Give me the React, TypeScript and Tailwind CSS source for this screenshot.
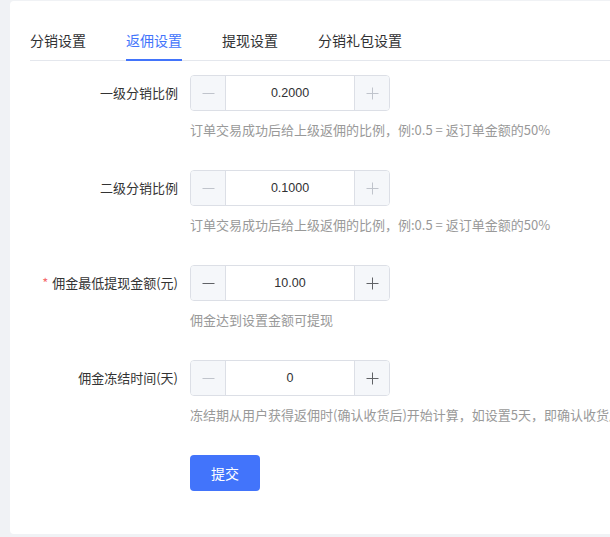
import React from "react";

const FONT = { fontFamily: '"Noto Sans CJK SC", "Noto Sans", sans-serif' };

function Icon({ kind, disabled }: { kind: "minus" | "plus"; disabled: boolean }) {
  const color = disabled ? "#c0c4cc" : "#606266";
  return (
    <svg width="13" height="13" viewBox="0 0 13 13" fill="none">
      <path d="M0.5 6.5H12.5" stroke={color} strokeWidth="1" />
      {kind === "plus" && <path d="M6.5 0.5V12.5" stroke={color} strokeWidth="1" />}
    </svg>
  );
}

function InputNumber({
  value,
  minusDisabled,
  plusDisabled,
}: {
  value: string;
  minusDisabled: boolean;
  plusDisabled: boolean;
}) {
  return (
    <div className="flex h-[36px] w-[200px] rounded-[4px] border border-[#dcdfe6] bg-white overflow-hidden">
      <div className="flex w-[35px] items-center justify-center border-r border-[#dcdfe6] bg-[#f5f7fa]">
        <Icon kind="minus" disabled={minusDisabled} />
      </div>
      <div
        className="flex flex-1 items-center justify-center text-[12.5px] text-[#303133]"
        style={{ fontFamily: '"Liberation Sans", Arial, sans-serif' }}
      >
        {value}
      </div>
      <div className="flex w-[35px] items-center justify-center border-l border-[#dcdfe6] bg-[#f5f7fa]">
        <Icon kind="plus" disabled={plusDisabled} />
      </div>
    </div>
  );
}

function Row({
  label,
  required,
  value,
  help,
  minusDisabled,
  plusDisabled,
}: {
  label: string;
  required?: boolean;
  value: string;
  help: string;
  minusDisabled: boolean;
  plusDisabled: boolean;
}) {
  return (
    <div className="mb-[30px] flex">
      <div className="flex h-[36px] w-[160px] shrink-0 items-center justify-end pr-[12px] text-[13px] text-[#333]">
        {required && <span className="mr-[4px] text-[#f56c6c]">*</span>}
        <span>{label}</span>
      </div>
      <div className="flex flex-col">
        <InputNumber value={value} minusDisabled={minusDisabled} plusDisabled={plusDisabled} />
        <div className="mt-[9px] whitespace-nowrap text-[13px] leading-5 text-[#999]">{help}</div>
      </div>
    </div>
  );
}

export default function App() {
  const tabs = ["分销设置", "返佣设置", "提现设置", "分销礼包设置"];
  return (
    <div className="h-[537px] w-[610px] overflow-hidden bg-[#f0f2f5] pl-[10px] pt-[1px]" style={FONT}>
      <div className="h-[533px] w-[620px] rounded-[4px] bg-white px-[20px] pt-[20px]">
        <div className="flex h-[40px] gap-[40px] border-b border-[#e4e7ed]">
          {tabs.map((t, i) => (
            <div
              key={t}
              className={
                i === 1
                  ? "relative flex h-[39px] items-center text-[14px] text-[#4274fb]"
                  : "relative flex h-[39px] items-center text-[14px] text-[#303133]"
              }
            >
              {t}
              {i === 1 && <span className="absolute bottom-[-1px] left-0 right-0 h-[2px] bg-[#4274fb]" />}
            </div>
          ))}
        </div>
        <div className="pt-[14px]">
          <Row
            label="一级分销比例"
            value="0.2000"
            help="订单交易成功后给上级返佣的比例，例:0.5 = 返订单金额的50%"
            minusDisabled
            plusDisabled
          />
          <Row
            label="二级分销比例"
            value="0.1000"
            help="订单交易成功后给上级返佣的比例，例:0.5 = 返订单金额的50%"
            minusDisabled
            plusDisabled
          />
          <Row
            label="佣金最低提现金额(元)"
            required
            value="10.00"
            help="佣金达到设置金额可提现"
            minusDisabled={false}
            plusDisabled={false}
          />
          <Row
            label="佣金冻结时间(天)"
            value="0"
            help="冻结期从用户获得返佣时(确认收货后)开始计算，如设置5天，即确认收货后5天后佣金才可提现"
            minusDisabled
            plusDisabled={false}
          />
          <div className="flex">
            <div className="w-[160px] shrink-0" />
            <button className="h-[36px] w-[70px] rounded-[4px] bg-[#4274fb] text-[14px] text-white">提交</button>
          </div>
        </div>
      </div>
    </div>
  );
}
